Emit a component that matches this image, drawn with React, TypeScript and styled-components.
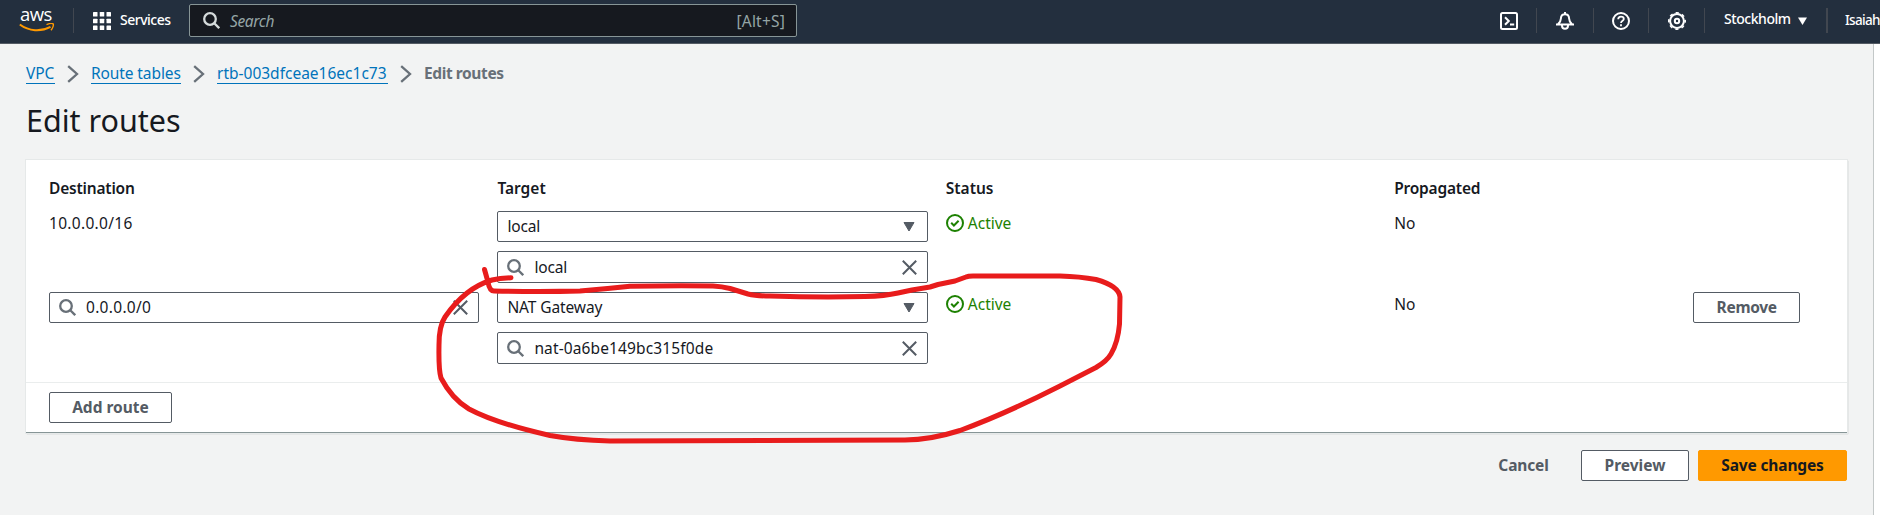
import React from "react";
import styled, { createGlobalStyle, css } from "styled-components";

const GlobalStyle = createGlobalStyle`
  * { box-sizing: border-box; }
  body {
    margin: 0;
    background: #f2f3f3;
    color: #16191f;
    font-family: "Noto Sans", "Open Sans", sans-serif;
    font-size: 15.5px;
    line-height: 22px;
    overflow: hidden;
  }
  svg { display: block; flex: none; }
`;

const Page = styled.div`
  position: relative;
  display: flex;
  flex-direction: column;
  width: 1880px;
  height: 515px;
  overflow: hidden;
`;

const TopBar = styled.header`
  display: flex;
  align-items: flex-start;
  flex: none;
  height: 44px;
  padding-left: 19px;
  background: #232f3e;
  border-bottom: 1px solid #545b64;
  color: #fff;
  font-size: 14px;
`;

const Logo = styled.div`
  flex: none;
  width: 36px;
  margin-top: 5px;
`;

const LogoText = styled.div`
  height: 18px;
  padding-left: 1px;
  font-family: "Open Sans", sans-serif;
  font-size: 18.5px;
  font-weight: 500;
  line-height: 18px;
  letter-spacing: -0.5px;
`;

const Separator = styled.div<{ $gap: number; $wide?: boolean }>`
  flex: none;
  width: ${(p) => (p.$wide ? 2 : 1)}px;
  height: 25px;
  margin: 8px 0 0 ${(p) => p.$gap}px;
  background: #414750;
`;

const ServicesButton = styled.div`
  display: flex;
  flex: none;
  align-items: flex-start;
  width: 96px;
  margin-left: 19px;
  padding-top: 12px;
`;

const TopLabel = styled.span<{ $spacing?: number }>`
  white-space: nowrap;
  line-height: 20px;
  font-weight: 500;
  letter-spacing: ${(p) => p.$spacing ?? 0}px;
`;

const ServicesLabel = styled(TopLabel)`
  margin: -2px 0 0 9px;
`;

const SearchBox = styled.div`
  display: flex;
  align-items: center;
  flex: none;
  width: 608px;
  height: 33px;
  margin-top: 4px;
  padding: 0 11px 0 13px;
  border: 1px solid #879596;
  border-radius: 2px;
  background: #16191f;
  color: #95a5a6;
  font-size: 15.5px;
`;

const SearchHint = styled.span`
  flex: 1;
  padding-left: 10px;
  font-style: italic;
  letter-spacing: -0.35px;
`;

const Shortcut = styled.span`
  letter-spacing: 0.2px;
  padding-top: 1px;
`;

const Tools = styled.div`
  display: flex;
  flex: none;
  align-items: flex-start;
  margin-left: 703px;
`;

const Tool = styled.div<{ $left?: number }>`
  margin: 12px 0 0 ${(p) => p.$left ?? 19}px;
`;

const Region = styled.div`
  display: flex;
  align-items: center;
  width: 102px;
  height: 20px;
  margin: 9px 0 0 19px;
  gap: 7px;
`;

const RegionCaret = styled.svg`
  margin-top: 4px;
`;

const Account = styled.div`
  margin: 9px 0 0 17px;
  font-size: 13.5px;
`;

const Body = styled.div`
  display: flex;
  flex: 1;
`;

const Main = styled.main`
  width: 1873px;
  padding: 18px 26px 0 26px;
`;

const HelpStrip = styled.aside`
  flex: 1;
  border-left: 1px solid #c3c8c8;
  background: #fff;
`;

const Breadcrumbs = styled.nav`
  display: flex;
  align-items: flex-start;
  height: 34px;
`;

const crumb = css`
  white-space: nowrap;
  height: 22px;
`;

const CrumbLink = styled.a<{ $spacing: number; $width: number }>`
  ${crumb}
  width: ${(p) => p.$width}px;
  color: #0073bb;
  border-bottom: 1px solid #0073bb;
  letter-spacing: ${(p) => p.$spacing}px;
`;

const CrumbCurrent = styled.span`
  ${crumb}
  color: #687078;
  font-weight: 700;
  letter-spacing: -0.4px;
`;

const CrumbArrow = styled.svg`
  margin: 3px 12px 0;
`;

const Title = styled.h1`
  margin: 0;
  padding-top: 4px;
  height: 64px;
  font-size: 30.5px;
  font-weight: 400;
  line-height: 40px;
`;

const Panel = styled.section`
  width: 1821px;
  height: 273px;
  background: #fff;
  border-bottom: 1px solid #879596;
  box-shadow: 0 0 0 1px #e6e9e9, 1px 1px 1px 0 rgba(0, 28, 36, 0.3);
`;

const RouteGrid = styled.div`
  display: grid;
  grid-template-columns: 430.4px 430.4px 430.4px 281px 107px;
  column-gap: 18px;
  grid-template-rows: 35px 81px 90px;
  height: 223px;
  padding: 16px 0 0 23px;
  border-bottom: 1px solid #eaeded;
`;

const HeaderCell = styled.div<{ $spacing?: number }>`
  padding-top: 1px;
  font-weight: 600;
  letter-spacing: ${(p) => p.$spacing ?? 0}px;
`;

const Cell = styled.div<{ $spacing?: number }>`
  padding-top: 1px;
  letter-spacing: ${(p) => p.$spacing ?? 0}px;
`;

const TargetCell = styled.div`
  display: flex;
  flex-direction: column;
  gap: 9px;
`;

const Field = styled.div<{ $height?: number; $right?: number }>`
  display: flex;
  align-items: center;
  height: ${(p) => p.$height ?? 31}px;
  padding: 0 ${(p) => p.$right ?? 10}px 0 9px;
  border: 1px solid #545b64;
  border-radius: 2px;
  background: #fff;
`;

const FieldText = styled.span<{ $spacing?: number; $icon?: boolean }>`
  flex: 1;
  padding-left: ${(p) => (p.$icon ? 10 : 0)}px;
  margin-top: -1px;
  letter-spacing: ${(p) => p.$spacing ?? 0}px;
`;

const Status = styled.div`
  display: flex;
  align-items: center;
  gap: 4px;
  height: 22px;
  margin-top: 1px;
  color: #1d8102;
`;

const Button = styled.button<{ $width: number; $kind?: "primary" | "link"; $spacing?: number }>`
  display: flex;
  align-items: center;
  justify-content: center;
  width: ${(p) => p.$width}px;
  height: 31px;
  padding: 0 0 2px;
  border: 1px solid #545b64;
  border-radius: 2px;
  background: #fff;
  color: #545b64;
  font: inherit;
  font-weight: 700;
  white-space: nowrap;
  letter-spacing: ${(p) => p.$spacing ?? 0}px;
  ${(p) =>
    p.$kind === "primary" &&
    css`
      border-color: #ff9900;
      background: #ff9900;
      color: #16191f;
    `}
  ${(p) =>
    p.$kind === "link" &&
    css`
      border-color: transparent;
      background: transparent;
    `}
`;

const PanelFooter = styled.div`
  padding: 9px 0 0 23px;
`;

const Actions = styled.div`
  display: flex;
  justify-content: flex-end;
  gap: 9px;
  width: 1821px;
  margin-top: 17px;
`;

const Annotation = styled.svg`
  position: absolute;
  left: 0;
  top: 0;
  pointer-events: none;
`;

const SearchIcon = ({ color = "#687078" }: { color?: string }) => (
  <svg width="17" height="17" viewBox="0 0 17 17" fill="none" stroke={color} strokeWidth="2.3">
    <circle cx="7" cy="7" r="5.8" />
    <path d="M11 11l5.200 5.200" />
  </svg>
);

const CloseIcon = () => (
  <svg width="15" height="15" viewBox="0 0 15 15" stroke="#545b64" strokeWidth="2">
    <path d="M.8.8l13.4 13.4M14.2.8L.8 14.2" />
  </svg>
);

const CaretIcon = () => (
  <svg width="12" height="10" viewBox="0 0 12 10">
    <path d="M1 .5h10L6 9z" fill="#545b64" stroke="#545b64" strokeLinejoin="round" />
  </svg>
);

const CheckIcon = () => (
  <svg width="18" height="18" viewBox="0 0 18 18" fill="none" stroke="#1d8102" strokeWidth="2">
    <circle cx="9" cy="9" r="8" />
    <path d="M5.2 8.8l2.7 2.7 4.7-4.7" />
  </svg>
);

const Arrow = () => (
  <CrumbArrow width="12" height="18" viewBox="0 0 12 18" fill="none" stroke="#687078" strokeWidth="2.3">
    <path d="M1.200 1.200L10 9l-8.800 7.800" />
  </CrumbArrow>
);

const RouteTarget = ({
  kind,
  kindSpacing,
  value,
  valueSpacing,
}: {
  kind: string;
  kindSpacing: number;
  value: string;
  valueSpacing: number;
}) => (
  <TargetCell>
    <Field $right={12}>
      <FieldText $spacing={kindSpacing}>{kind}</FieldText>
      <CaretIcon />
    </Field>
    <Field $height={32}>
      <SearchIcon />
      <FieldText $icon $spacing={valueSpacing}>{value}</FieldText>
      <CloseIcon />
    </Field>
  </TargetCell>
);

const ActiveStatus = () => (
  <Status>
    <CheckIcon />
    Active
  </Status>
);

export default function App() {
  return (
    <Page>
      <GlobalStyle />
      <TopBar>
        <Logo>
          <LogoText>aws</LogoText>
          <svg width="36" height="9" viewBox="0 0 36 9" fill="none" stroke="#ff9900">
            <path d="M.8 1.500C10 8.400 22 8.900 31.500 3.800" strokeWidth="2" />
            <path d="M27.500 1.600c3-1.200 6-1.400 6.700-.6.600.9-.3 4-2.200 6.300" strokeWidth="1.400" />
          </svg>
        </Logo>
        <Separator $gap={18} />
        <ServicesButton>
          <svg width="18" height="18" viewBox="0 0 18 18" fill="#fff">
            {[0, 6.75, 13.5].map((y) =>
              [0, 6.75, 13.5].map((x) => <rect key={`${x}-${y}`} x={x} y={y} width="4.5" height="4.5" rx=".6" />)
            )}
          </svg>
          <ServicesLabel $spacing={-0.5}>Services</ServicesLabel>
        </ServicesButton>
        <SearchBox>
          <SearchIcon color="#d5dbdb" />
          <SearchHint>Search</SearchHint>
          <Shortcut>[Alt+S]</Shortcut>
        </SearchBox>
        <Tools>
          <Tool $left={0}>
            <svg width="18" height="18" viewBox="0 0 18 18" fill="none" stroke="#fff" strokeWidth="2">
              <rect x="1" y="1" width="16" height="16" rx="1.500" />
              <path d="M5 5.200L8.800 9 5 12.800M10 12.500h4.200" />
            </svg>
          </Tool>
          <Separator $gap={18} />
          <Tool>
            <svg width="18" height="18" viewBox="0 0 18 18" fill="none" stroke="#fff" strokeWidth="2">
              <path d="M9 0v2.500M2 12.300C4 10.500 4.800 9 4.900 6.500 5 4 6.500 2.300 9 2.300S13 4 13.100 6.500c.1 2.500.9 4 2.900 5.800M0 12.500h18" />
              <path d="M6 12.500v1.200a3 3 0 0 0 6 0v-1.200" />
            </svg>
          </Tool>
          <Separator $gap={19} />
          <Tool $left={18}>
            <svg width="18" height="18" viewBox="0 0 18 18" fill="none" stroke="#fff" strokeWidth="2">
              <circle cx="9" cy="9" r="8" />
              <path d="M6.200 7.200C6.200 5.400 7.400 4.600 9 4.600s2.800.9 2.800 2.300C11.800 8.700 9 8.700 9 11M9 12.200v2" strokeWidth="1.800" />
            </svg>
          </Tool>
          <Separator $gap={18} />
          <Tool>
            <svg width="18" height="18" viewBox="0 0 18 18" fill="none" stroke="#fff">
              <circle cx="9" cy="9" r="6.900" strokeWidth="2" />
              <circle cx="9" cy="9" r="8.200" strokeWidth="1.600" strokeDasharray="3.200 3.240" strokeDashoffset="1.600" />
              <circle cx="9" cy="9" r="2.200" strokeWidth="2" />
            </svg>
          </Tool>
          <Separator $gap={18} />
          <Region>
            <TopLabel $spacing={-0.45}>Stockholm</TopLabel>
            <RegionCaret width="9" height="8" viewBox="0 0 9 8" fill="#fff">
              <path d="M0 .5h9L4.500 8z" />
            </RegionCaret>
          </Region>
          <Separator $gap={0} $wide />
          <Account>
            <TopLabel $spacing={-0.7}>Isaiah</TopLabel>
          </Account>
        </Tools>
      </TopBar>

      <Body>
        <Main>
          <Breadcrumbs>
            <CrumbLink $width={29} $spacing={-0.05}>VPC</CrumbLink>
            <Arrow />
            <CrumbLink $width={90} $spacing={-0.1}>Route tables</CrumbLink>
            <Arrow />
            <CrumbLink $width={171} $spacing={0}>rtb-003dfceae16ec1c73</CrumbLink>
            <Arrow />
            <CrumbCurrent>Edit routes</CrumbCurrent>
          </Breadcrumbs>
          <Title>Edit routes</Title>

          <Panel>
            <RouteGrid>
              <HeaderCell $spacing={-0.2}>Destination</HeaderCell>
              <HeaderCell>Target</HeaderCell>
              <HeaderCell>Status</HeaderCell>
              <HeaderCell $spacing={-0.2}>Propagated</HeaderCell>
              <div />

              <Cell $spacing={0.3}>10.0.0.0/16</Cell>
              <RouteTarget kind="local" kindSpacing={-0.15} value="local" valueSpacing={-0.15} />
              <ActiveStatus />
              <Cell>No</Cell>
              <div />

              <Field>
                <SearchIcon />
                <FieldText $icon $spacing={0.3}>0.0.0.0/0</FieldText>
                <CloseIcon />
              </Field>
              <RouteTarget kind="NAT Gateway" kindSpacing={-0.1} value="nat-0a6be149bc315f0de" valueSpacing={0.13} />
              <ActiveStatus />
              <Cell>No</Cell>
              <Button $width={107} $spacing={-0.3}>Remove</Button>
            </RouteGrid>
            <PanelFooter>
              <Button $width={123}>Add route</Button>
            </PanelFooter>
          </Panel>

          <Actions>
            <Button $kind="link" $width={97} $spacing={-0.15}>Cancel</Button>
            <Button $width={108}>Preview</Button>
            <Button $kind="primary" $width={149} $spacing={-0.15}>Save changes</Button>
          </Actions>
        </Main>
        <HelpStrip />
      </Body>

      <Annotation width="1880" height="515" viewBox="0 0 1880 515" fill="none">
        <path
          d="M484.500 269.500L488 282Q489.500 291 494 291Q540 292 580 291Q605 289 630 286.300Q672 285.500 713 286Q722 286.500 730 288.500L748 294Q756 296 770 296Q820 297.500 865 296.500Q885 296 898 293L912 290L930 287L938 284.500L955 281L966 277Q968 276 973 276L1060 276Q1080 276.500 1096 279.500Q1119 286 1120 297L1119.500 324Q1118 342 1111 354Q1107 361 1096 367.500L1060 386Q1005 414 960 430.500Q930 440 905 440L610 441Q575 440 550 435.500Q495 423 469 409Q452 399 441 378Q438.500 370 439 345Q439 326 445 317Q465 288 492 280Q500 278 511 277.800"
          stroke="#e81c1c"
          strokeWidth="5"
          strokeLinecap="round"
          strokeLinejoin="round"
        />
      </Annotation>
    </Page>
  );
}
